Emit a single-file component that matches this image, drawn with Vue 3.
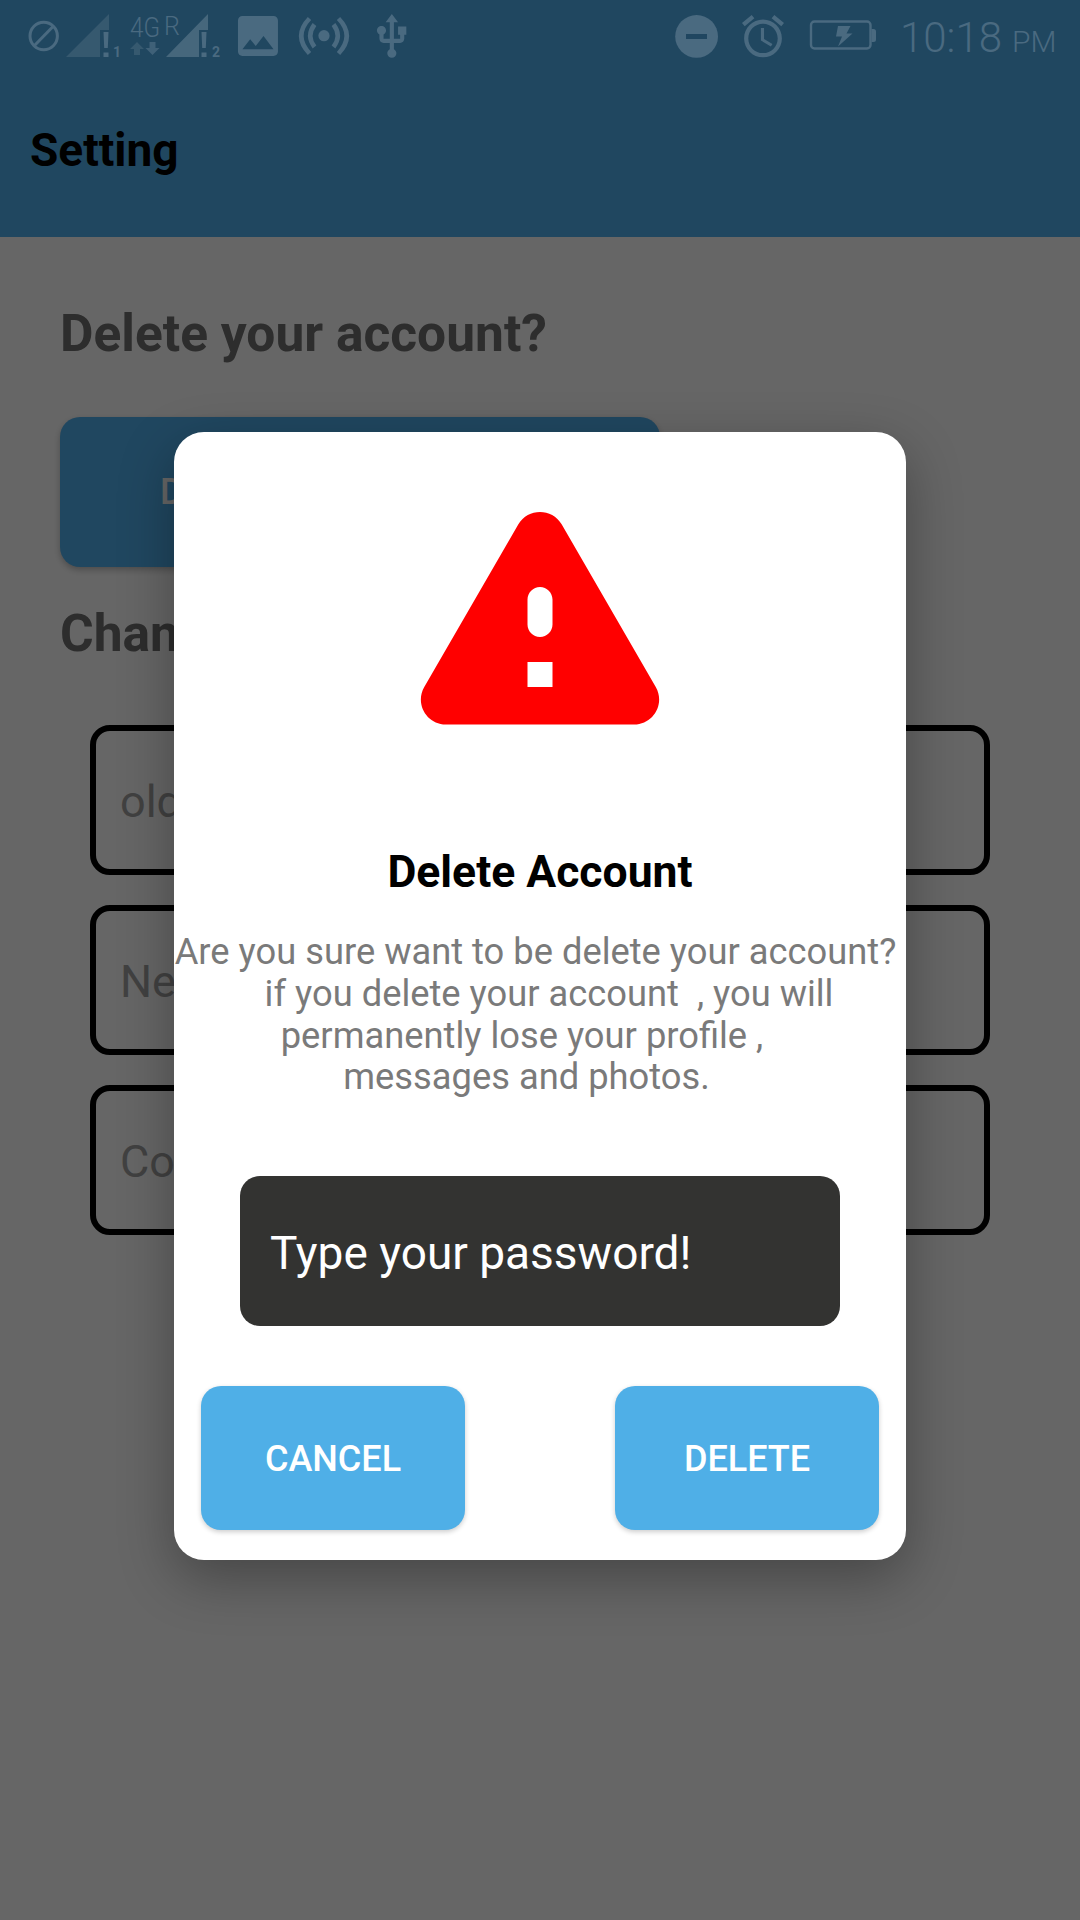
<script setup>
const fields = ['old password', 'New password', 'Confirm password']
const message = [
  'Are you sure want to be delete your account? ',
  '  if you delete your account  , you will',
  'permanently lose your profile ,    ',
  'messages and photos.   ',
].join('\n')
</script>

<template>
  <div class="page">
    <header class="appbar">
      <div class="statusbar">
        <svg class="status-left" width="420" height="75" viewBox="0 0 420 75" aria-hidden="true">
          <circle cx="43.7" cy="36" r="13.7" fill="none" class="s-bright" stroke-width="3" />
          <path d="M34 46 L53.5 26" fill="none" class="s-bright" stroke-width="3" />

          <path class="f-dim" d="M66 57 L109 14 V30 H100 V57 Z" />
          <path class="f-bright" d="M103.5 32 h5 l-.7 16 h-3.6 Z M103.5 52.5 h5 V57 h-5 Z" />
          <text class="tiny" x="113" y="56.5">1</text>

          <text class="net net-large" x="130" y="37" textLength="30" lengthAdjust="spacingAndGlyphs">4G</text>
          <text class="net" x="164" y="35">R</text>
          <path class="f-dim" d="M137 42 l7 7 h-4 v6 h-6 v-6 h-4 Z" />
          <path class="f-bright" opacity=".75" d="M149.5 42 h6 v6 h4 l-7 7 -7 -7 h4 Z" />

          <path class="f-bright" opacity=".9" d="M166 57 L208 14 V30 H199 V57 Z" />
          <path class="f-bright" d="M201.5 32 h5 l-.7 16 h-3.6 Z M201.5 52.5 h5 V57 h-5 Z" />
          <text class="tiny" x="212" y="56.5">2</text>

          <g transform="translate(231.3 9.3) scale(2.222)">
            <path class="f-bright" d="M21 19V5c0-1.1-.9-2-2-2H5c-1.1 0-2 .9-2 2v14c0 1.1.9 2 2 2h14c1.1 0 2-.9 2-2zM8.5 13.5l2.5 3.01L14.5 12l4.5 6H5l3.5-4.5z" />
          </g>

          <circle class="f-bright" cx="324" cy="35.7" r="5.6" />
          <g fill="none" class="s-bright" stroke-width="4.6">
            <path d="M314.5 24.5 Q306 35.7 314.5 47" />
            <path d="M333.5 24.5 Q342 35.7 333.5 47" />
            <path d="M309.5 18.5 Q293 35.7 309.5 53.5" />
            <path d="M338.5 18.5 Q355 35.7 338.5 53.5" />
          </g>

          <g transform="translate(367 11.9) scale(2.07)">
            <path class="f-bright" d="M15 7v4h1v2h-3V5h2l-3-4-3 4h2v8H8v-2.07c.7-.37 1.2-1.08 1.2-1.93 0-1.21-.99-2.2-2.2-2.2-1.21 0-2.2.99-2.2 2.2 0 .85.5 1.56 1.2 1.93V13c0 1.11.89 2 2 2h3v3.05c-.71.37-1.2 1.1-1.2 1.95 0 1.22.99 2.2 2.2 2.2 1.21 0 2.2-.98 2.2-2.2 0-.85-.49-1.58-1.2-1.95V15h3c1.11 0 2-.89 2-2v-2h1V7h-4z" />
          </g>
        </svg>

        <svg class="status-right" width="220" height="75" viewBox="665 0 220 75" aria-hidden="true">
          <circle class="f-bright" cx="696.6" cy="36.4" r="21.4" />
          <rect x="686" y="34" width="21" height="5" fill="#204660" />

          <g transform="translate(737.8 11.1) scale(2.1)">
            <path class="f-bright" d="M22 5.72l-4.6-3.86-1.29 1.53 4.6 3.86L22 5.72zM7.88 3.39L6.6 1.86 2 5.71l1.29 1.53 4.59-3.85zM12.5 8H11v6l4.75 2.85.75-1.23-4-2.37V8zM12 4c-4.97 0-9 4.03-9 9s4.03 9 9 9c4.97 0 9-4.03 9-9s-4.03-9-9-9zm0 16c-3.87 0-7-3.13-7-7s3.13-7 7-7 7 3.13 7 7-3.13 7-7 7z" />
          </g>

          <rect x="811" y="21.5" width="59.5" height="27" rx="3.5" fill="none" class="s-bright" stroke-width="2.4" />
          <path class="f-bright" d="M871.5 29 h2 a2.5 2.5 0 0 1 2.5 2.5 v8 a2.5 2.5 0 0 1 -2.5 2.5 h-2 Z" />
          <path class="f-bright" d="M838 26 h12.5 l-4 7.5 h6 l-14.5 13 l4 -10 h-6 Z" />
        </svg>

        <div class="clock"><span class="clock-time">10:18</span><span class="clock-ampm">PM</span></div>
      </div>
      <h1 class="appbar-title">Setting</h1>
    </header>

    <main class="content">
      <h2 class="section-title">Delete your account?</h2>
      <button class="primary-btn" type="button">DELETE ACCOUNT</button>
      <h2 class="section-title change-title">Change password</h2>
      <div class="fields">
        <div v-for="field in fields" :key="field" class="field">{{ field }}</div>
      </div>
    </main>

    <div class="scrim">
      <section class="dialog">
        <svg class="warning" width="300" height="300" viewBox="0 0 24 24" aria-hidden="true">
          <path fill="#ff0000" d="M4.47 21h15.06c1.54 0 2.5-1.67 1.73-3L13.73 4.99c-.77-1.33-2.69-1.33-3.46 0L2.74 18c-.77 1.33.19 3 1.73 3zM12 14c-.55 0-1-.45-1-1v-2c0-.55.45-1 1-1s1 .45 1 1v2c0 .55-.45 1-1 1zm1 4h-2v-2h2v2z" />
        </svg>
        <h3 class="dialog-title">Delete Account</h3>
        <p class="dialog-text">{{ message }}</p>
        <div class="password">Type your password!</div>
        <div class="actions">
          <button class="action" type="button">CANCEL</button>
          <button class="action" type="button">DELETE</button>
        </div>
      </section>
    </div>
  </div>
</template>

<style>
html, body { margin: 0; padding: 0; }
</style>

<style scoped>
.page {
  position: relative;
  width: 1080px;
  height: 1920px;
  overflow: hidden;
  background: #fff;
  font-family: Roboto, "Liberation Sans", sans-serif;
}
.appbar {
  height: 237px;
  background: #51b1ef;
}
.statusbar {
  position: relative;
  z-index: 2;
  display: flex;
  align-items: flex-start;
  height: 75px;
}
.status-left { flex: none; }
.status-right { flex: none; margin-left: 245px; }
.clock {
  display: flex;
  align-items: baseline;
  margin-left: 15px;
  padding-top: 14px;
  color: #4a6a80;
  font-weight: 300;
}
.clock-time { font-size: 42px; line-height: 48px; }
.clock-ampm { font-size: 30px; line-height: 48px; margin-left: 10px; }
.s-bright { stroke: #4a6a80; }
.f-bright { fill: #4a6a80; }
.f-dim { fill: #36596f; }
.tiny { fill: #4a6a80; font-size: 14px; font-weight: 700; font-family: Roboto, sans-serif; }
.net { fill: #4a6a80; font-size: 25px; font-weight: 300; font-family: Roboto, sans-serif; }
.net-large { font-size: 28px; }
.appbar-title {
  margin: 0;
  padding: 50px 0 0 30px;
  font-size: 46px;
  line-height: 50px;
  font-weight: 700;
  color: #000;
}
.content {
  padding: 69px 0 0 60px;
}
.section-title {
  margin: 0;
  font-size: 51.5px;
  line-height: 56px;
  font-weight: 700;
  color: #707070;
}
.primary-btn {
  display: block;
  width: 600px;
  height: 150px;
  margin-top: 55px;
  padding: 0 0 0 100px;
  border: 0;
  border-radius: 20px;
  background: #51b1ef;
  box-shadow: 0 3px 6px rgba(0, 0, 0, .25);
  color: #fff;
  font-family: inherit;
  font-size: 36px;
  font-weight: 500;
  text-align: left;
}
.change-title { margin-top: 39px; }
.fields {
  display: flex;
  flex-direction: column;
  gap: 30px;
  width: 900px;
  margin: 63px 0 0 30px;
}
.field {
  box-sizing: border-box;
  display: flex;
  align-items: center;
  height: 150px;
  padding-left: 24px;
  padding-top: 2px;
  border: 6px solid #000;
  border-radius: 20px;
  font-size: 45px;
  color: #a3a3a3;
}
.scrim {
  position: absolute;
  inset: 0;
  z-index: 1;
  display: flex;
  justify-content: center;
  align-items: flex-start;
  padding-top: 432px;
  background: rgba(0, 0, 0, .6);
}
.dialog {
  box-sizing: border-box;
  display: flex;
  flex-direction: column;
  align-items: center;
  width: 732px;
  height: 1128px;
  padding: 30px 27px;
  border-radius: 30px;
  background: #fff;
  box-shadow: 0 18px 55px rgba(0, 0, 0, .32);
}
.warning { display: block; flex: none; }
.dialog-title {
  margin: 85px 0 0;
  font-size: 44.5px;
  line-height: 50px;
  font-weight: 700;
  color: #000;
}
.dialog-text {
  width: 732px;
  margin: 34px -27px 0;
  font-size: 36.3px;
  line-height: 41.8px;
  color: #7a7a7a;
  text-align: center;
  white-space: pre;
}
.password {
  box-sizing: border-box;
  display: flex;
  align-items: center;
  flex: none;
  width: 600px;
  height: 150px;
  margin-top: 78px;
  padding-left: 30px;
  padding-top: 3px;
  border-radius: 20px;
  background: #333331;
  font-size: 46px;
  color: #fff;
}
.actions {
  display: flex;
  justify-content: space-between;
  align-self: stretch;
  margin-top: 59.8px;
}
.action {
  width: 264px;
  height: 144px;
  padding: 3px 0 0;
  border: 0;
  border-radius: 20px;
  background: #4fafe7;
  box-shadow: 0 2px 5px rgba(0, 0, 0, .2);
  color: #fff;
  font-family: inherit;
  font-size: 36px;
  font-weight: 500;
}
</style>
